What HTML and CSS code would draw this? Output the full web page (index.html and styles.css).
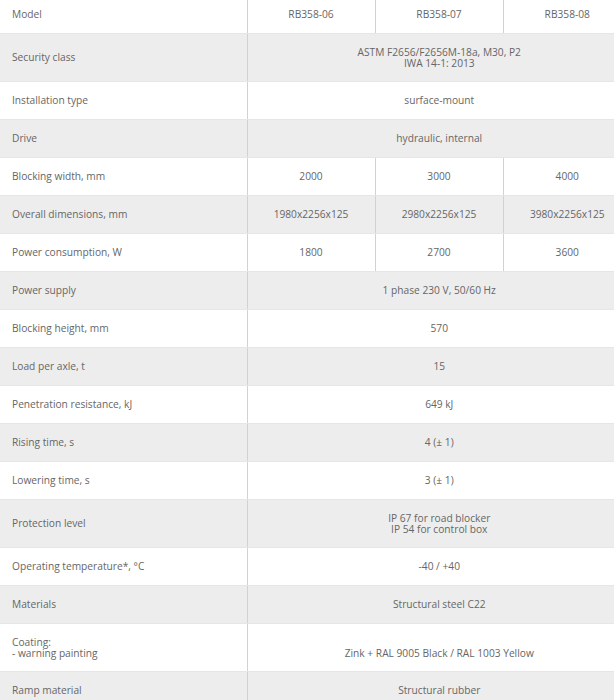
FILE: index.html
```html
<!DOCTYPE html>
<html lang="en">
<head>
<meta charset="utf-8">
<title>RB358 specifications</title>
<link rel="stylesheet" href="styles.css">
</head>
<body>
<div class="wrap">
<table class="specs">
  <colgroup>
    <col class="c-label">
    <col class="c-val">
    <col class="c-val">
    <col class="c-val">
  </colgroup>
  <tbody>
    <tr class="first"><td class="label">Model</td><td>RB358-06</td><td>RB358-07</td><td>RB358-08</td></tr>
    <tr class="tall"><td class="label">Security class</td><td colspan="3">ASTM F2656/F2656M-18a, M30, P2<br>IWA 14-1: 2013</td></tr>
    <tr><td class="label">Installation type</td><td colspan="3">surface-mount</td></tr>
    <tr><td class="label">Drive</td><td colspan="3">hydraulic, internal</td></tr>
    <tr><td class="label">Blocking width, mm</td><td>2000</td><td>3000</td><td>4000</td></tr>
    <tr><td class="label">Overall dimensions, mm</td><td>1980x2256x125</td><td>2980x2256x125</td><td>3980x2256x125</td></tr>
    <tr><td class="label">Power consumption, W</td><td>1800</td><td>2700</td><td>3600</td></tr>
    <tr><td class="label">Power supply</td><td colspan="3">1 phase 230 V, 50/60 Hz</td></tr>
    <tr><td class="label">Blocking height, mm</td><td colspan="3">570</td></tr>
    <tr><td class="label">Load per axle, t</td><td colspan="3">15</td></tr>
    <tr><td class="label">Penetration resistance, kJ</td><td colspan="3">649 kJ</td></tr>
    <tr><td class="label">Rising time, s</td><td colspan="3">4 (± 1)</td></tr>
    <tr><td class="label">Lowering time, s</td><td colspan="3">3 (± 1)</td></tr>
    <tr class="tall"><td class="label">Protection level</td><td colspan="3">IP 67 for road blocker<br>IP 54 for control box</td></tr>
    <tr><td class="label">Operating temperature*, °C</td><td colspan="3">-40 / +40</td></tr>
    <tr><td class="label">Materials</td><td colspan="3">Structural steel C22</td></tr>
    <tr class="tall"><td class="label">Coating:<br>- warning painting</td><td colspan="3"><br>Zink + RAL 9005 Black / RAL 1003 Yellow</td></tr>
    <tr><td class="label">Ramp material</td><td colspan="3">Structural rubber</td></tr>
  </tbody>
</table>
</div>
</body>
</html>
```
FILE: styles.css
```css
html, body {
  margin: 0;
  padding: 0;
  background: #ffffff;
}

.wrap {
  width: 614px;
  overflow: hidden;
}

.specs {
  width: 631px;
  border-collapse: collapse;
  table-layout: fixed;
  font-family: "Open Sans", "Noto Sans", sans-serif;
  font-size: 10.2px;
  line-height: 11px;
  color: #666666;
}

.c-label { width: 247px; }
.c-val { width: 128px; }

.specs td {
  height: 37px;
  padding: 0;
  text-align: center;
  vertical-align: middle;
  border-left: 1px solid #d2d2d2;
  border-bottom: 1px solid #e6e6e6;
}

.specs td.label {
  text-align: left;
  padding-left: 12px;
  border-left: none;
}

.specs tr:nth-child(even) td {
  background: #ededed;
}

.specs tr.first td {
  height: 29px;
  padding-bottom: 4px;
}

.specs tr.tall td {
  height: 47px;
}
```
